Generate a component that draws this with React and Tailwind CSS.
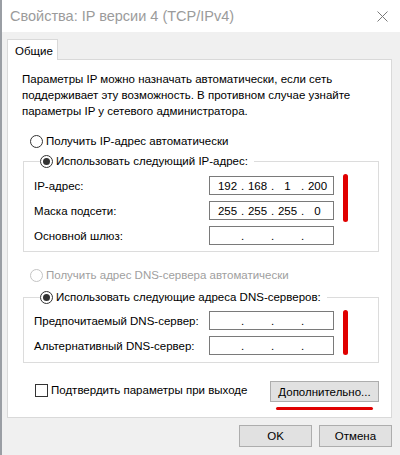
import React from 'react';

const font = "font-['Liberation_Sans','Noto_Sans',sans-serif]";

const Radio = ({ checked, disabled, label }) => (
  <label className={`flex items-center h-[16px] ${disabled ? 'text-[#a0a0a0]' : 'text-black'}`}>
    <span
      className={`w-[13px] h-[13px] rounded-full border bg-white flex items-center justify-center ${
        disabled ? 'border-[#c4c4c4]' : 'border-[#333333]'
      }`}
    >
      {checked && <span className="w-[7px] h-[7px] rounded-full bg-[#333333]" />}
    </span>
    <span className="ml-[3px]">{label}</span>
  </label>
);

const IpField = ({ octets }) => (
  <div className="w-[125px] h-[19px] border border-[#7a7a7a] bg-white flex items-center pl-[6px]">
    {[0, 1, 2, 3].map((i) => (
      <React.Fragment key={i}>
        <span className="w-[23px] text-center">{octets ? octets[i] : ''}</span>
        {i < 3 && <span className="w-[7px] text-center">.</span>}
      </React.Fragment>
    ))}
  </div>
);

const Row = ({ label, octets }) => (
  <div className="flex items-center justify-between h-[19px] pr-[44px]">
    <span>{label}</span>
    <IpField octets={octets} />
  </div>
);

const App = () => {
  return (
    <div className={`w-[400px] h-[455px] flex bg-[#f0f0f0] text-[11.5px] leading-[16px] text-black ${font}`}>
      <div className="w-[2px] bg-[#9a9ea4]" />
      <div className="flex-1 flex flex-col">
        {/* title bar */}
        <div className="h-[32px] bg-white flex items-center justify-between pl-[8px] pr-[12px]">
          <span className="text-[14.5px] text-[#9b9b9b]">Свойства: IP версии 4 (TCP/IPv4)</span>
          <svg width="11" height="11" viewBox="0 0 11 11">
            <path d="M0.5 0.5 L10.5 10.5 M10.5 0.5 L0.5 10.5" stroke="#7a7a7a" strokeWidth="1" />
          </svg>
        </div>

        <div className="pl-[5px] pr-[8px] pt-[7px]">
          {/* tab */}
          <div className="flex">
            <div className="w-[51px] h-[21px] bg-white border border-b-0 border-[#d9d9d9] pl-[7px] pt-[3px] -mb-px relative z-10">
              Общие
            </div>
          </div>

          {/* panel */}
          <div className="h-[359px] bg-white border border-[#d9d9d9] flex flex-col">
            <p className="mt-[11px] pl-[14px]">
              Параметры IP можно назначать автоматически, если сеть
              <br />
              поддерживает эту возможность. В противном случае узнайте
              <br />
              параметры IP у сетевого администратора.
            </p>

            <div className="mt-[14px] pl-[22px]">
              <Radio label="Получить IP-адрес автоматически" />
            </div>

            <fieldset className="mt-[4px] ml-[15px] mr-[12px] border border-[#dcdcdc] pl-[10px] pb-[6px] relative">
              <legend className="ml-[6px] pr-[6px] bg-white">
                <Radio checked label="Использовать следующий IP-адрес:" />
              </legend>
              <div className="mt-[7px] flex flex-col gap-[6px]">
                <Row label="IP-адрес:" octets={['192', '168', '1', '200']} />
                <Row label="Маска подсети:" octets={['255', '255', '255', '0']} />
                <Row label="Основной шлюз:" />
              </div>
              <span className="absolute left-[319px] top-[5px] w-[5px] h-[48px] rounded-full bg-[#e00000]" />
            </fieldset>

            <div className="mt-[15px] pl-[22px]">
              <Radio disabled label="Получить адрес DNS-сервера автоматически" />
            </div>

            <fieldset className="mt-[6px] ml-[15px] mr-[12px] border border-[#dcdcdc] pl-[10px] pb-[7px] relative">
              <legend className="ml-[6px] pr-[6px] bg-white">
                <Radio checked label="Использовать следующие адреса DNS-серверов:" />
              </legend>
              <div className="mt-[6px] flex flex-col gap-[6px]">
                <Row label="Предпочитаемый DNS-сервер:" />
                <Row label="Альтернативный DNS-сервер:" />
              </div>
              <span className="absolute left-[319px] top-[5px] w-[5px] h-[45px] rounded-full bg-[#e00000]" />
            </fieldset>

            <div className="mt-[18px] pl-[27px] pr-[12px] flex justify-between items-start">
              <label className="flex items-center mt-[1px]">
                <span className="w-[13px] h-[13px] border border-[#333333] bg-white" />
                <span className="ml-[3px]">Подтвердить параметры при выходе</span>
              </label>
              <div className="flex flex-col items-center">
                <button className="w-[109px] h-[21px] bg-[#e1e1e1] border border-[#adadad]">
                  Дополнительно...
                </button>
                <span className="mt-[5px] w-[97px] h-[3px] rounded-full bg-[#e00000]" />
              </div>
            </div>
          </div>

          {/* dialog buttons */}
          <div className="mt-[7px] flex justify-end gap-[7px]">
            <button className="w-[73px] h-[22px] bg-[#e1e1e1] border border-[#adadad]">OK</button>
            <button className="w-[73px] h-[22px] bg-[#e1e1e1] border border-[#adadad]">Отмена</button>
          </div>
        </div>
      </div>
    </div>
  );
};

export default App;
